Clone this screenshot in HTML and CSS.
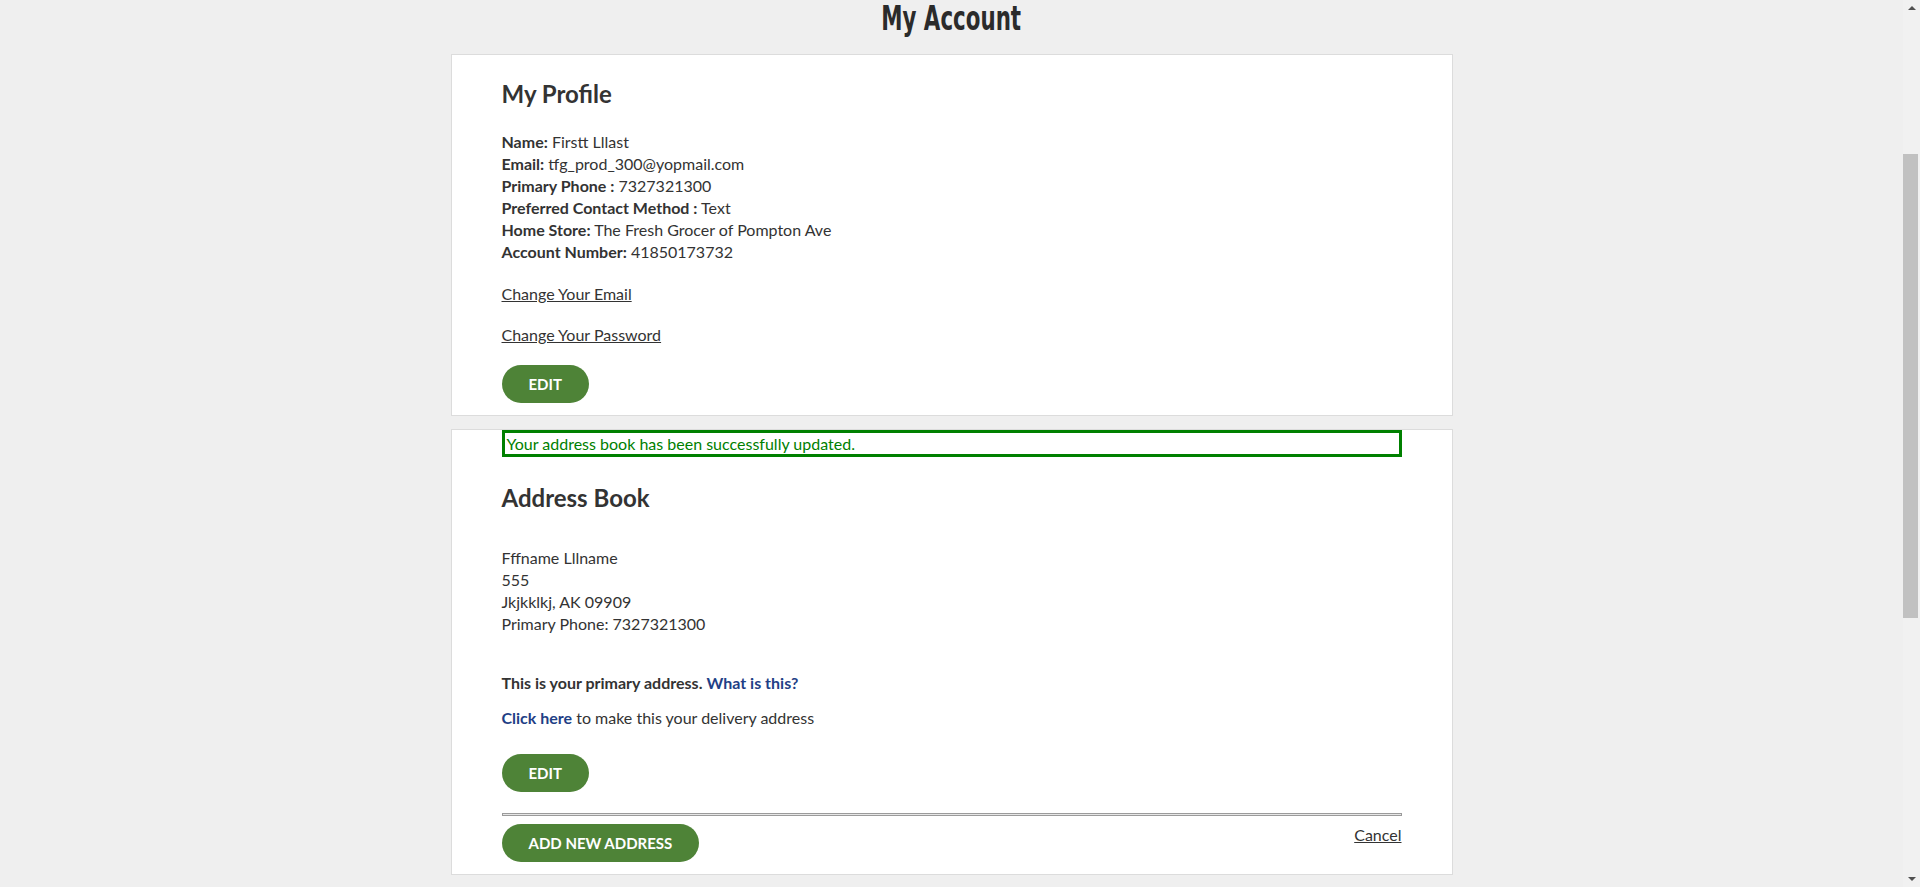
FILE: index.html
```html
<!DOCTYPE html>
<html lang="en">
<head>
<meta charset="utf-8">
<title>My Account</title>
<link rel="stylesheet" href="styles.css">
</head>
<body>
<main class="page">
  <h1 class="page-title"><span class="page-title-text">My Account</span></h1>

  <section class="card profile">
    <h2 class="card-title">My Profile</h2>
    <ul class="info">
      <li><b>Name:</b> Firstt Lllast</li>
      <li><b>Email:</b> tfg_prod_300@yopmail.com</li>
      <li><b>Primary Phone :</b> 7327321300</li>
      <li><b>Preferred Contact Method :</b> Text</li>
      <li><b>Home Store:</b> The Fresh Grocer of Pompton Ave</li>
      <li><b>Account Number:</b> 41850173732</li>
    </ul>
    <p class="plain-link"><a href="#">Change Your Email</a></p>
    <p class="plain-link"><a href="#">Change Your Password</a></p>
    <button class="btn" type="button">Edit</button>
  </section>

  <section class="card addresses">
    <div class="notice">Your address book has been successfully updated.</div>
    <h2 class="card-title address-title">Address Book</h2>
    <address class="address">
      Fffname Lllname<br>
      555<br>
      Jkjkklkj, AK 09909<br>
      Primary Phone: 7327321300
    </address>
    <p class="primary-note"><b>This is your primary address.</b> <a class="blue-link" href="#">What is this?</a></p>
    <p class="delivery-note"><a class="blue-link" href="#">Click here</a> to make this your delivery address</p>
    <button class="btn" type="button">Edit</button>
    <hr class="divider">
    <div class="address-actions">
      <button class="btn" type="button">Add New Address</button>
      <a class="cancel" href="#">Cancel</a>
    </div>
  </section>
</main>

<aside class="scrollbar" aria-hidden="true">
  <span class="scroll-arrow scroll-arrow-up"></span>
  <span class="scroll-track"><span class="scroll-thumb"></span></span>
  <span class="scroll-arrow scroll-arrow-down"></span>
</aside>
</body>
</html>
```

FILE: styles.css
```css
body {
  margin: 0;
  padding-right: 17px;
  background: #efefef;
  color: #333333;
  font-family: Lato, "Open Sans", "Liberation Sans", sans-serif;
  font-size: 16px;
  line-height: 22px;
}

.page {
  width: 1002px;
  margin: 0 auto;
  padding-bottom: 12px;
}

.page-title {
  margin: 0;
  height: 54px;
  text-align: center;
  font-family: "DejaVu Sans Condensed", "DejaVu Sans", sans-serif;
  font-stretch: condensed;
  font-weight: 700;
  font-size: 33px;
  line-height: 36px;
  color: #2b2b2b;
  padding-top: 1px;
  box-sizing: border-box;
}

.page-title-text {
  display: inline-block;
  transform: scaleX(0.72);
  transform-origin: center;
}

.card {
  background: #ffffff;
  border: 1px solid #dcdcdc;
  padding: 0 50px 12px;
}

.profile {
  padding-top: 24px;
}

.addresses {
  margin-top: 13px;
  padding-top: 0;
}

.card-title {
  margin: 0;
  font-size: 24px;
  line-height: 30px;
  font-weight: 700;
  color: #333333;
}

.info {
  list-style: none;
  margin: 22px 0 0;
  padding: 0;
}

.info b {
  font-weight: 700;
}

.plain-link {
  margin: 20px 0 0;
}

.plain-link + .plain-link {
  margin-top: 19px;
}

.plain-link a,
.cancel {
  color: #333333;
  text-decoration: underline;
}

.btn {
  display: block;
  height: 38px;
  padding: 0 27px;
  border: 0;
  border-radius: 19px;
  background: #4e8337;
  color: #ffffff;
  font-family: inherit;
  font-size: 15px;
  font-weight: 700;
  text-transform: uppercase;
  cursor: pointer;
}

.profile .btn {
  margin-top: 19px;
}

.notice {
  border: 3px solid #008000;
  color: #008000;
  line-height: 21px;
  padding: 0 0 0 2px;
}

.address-title {
  margin-top: 26px;
}

.address {
  font-style: normal;
  margin-top: 34px;
}

.primary-note {
  margin: 37px 0 0;
}

.delivery-note {
  margin: 13px 0 0;
}

.blue-link {
  color: #1f3f86;
  font-weight: 700;
  text-decoration: none;
}

.delivery-note + .btn {
  margin-top: 25px;
}

.divider {
  margin: 21px 0 0;
  height: 1px;
  border: 1px solid #9b9b9b;
  background: #e6e6e6;
}

.address-actions {
  margin-top: 8px;
  display: flex;
  justify-content: space-between;
  align-items: flex-start;
}

.scrollbar {
  position: fixed;
  top: 0;
  right: 0;
  bottom: 0;
  width: 17px;
  background: #f1f1f1;
  display: flex;
  flex-direction: column;
  align-items: center;
}

.scroll-arrow {
  width: 0;
  height: 0;
  border-left: 4px solid transparent;
  border-right: 4px solid transparent;
  margin: 6px 0;
}

.scroll-arrow-up {
  border-bottom: 4px solid #505050;
}

.scroll-arrow-down {
  border-top: 4px solid #505050;
}

.scroll-track {
  flex: 1;
  align-self: stretch;
  display: flex;
  flex-direction: column;
  padding: 138px 2px 0 0;
}

.scroll-thumb {
  height: 464px;
  background: #c1c1c1;
}
```
